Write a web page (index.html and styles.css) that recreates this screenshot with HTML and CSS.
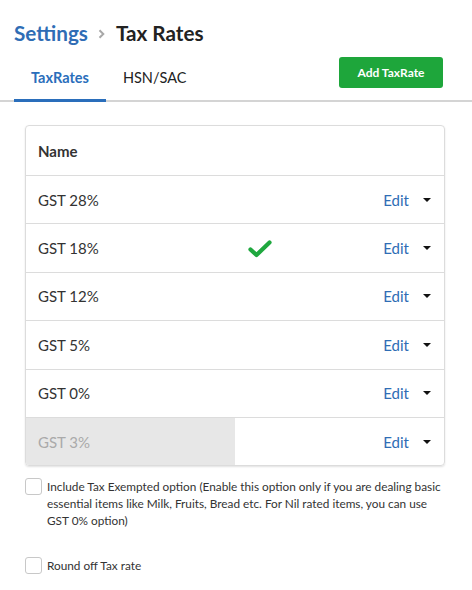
FILE: index.html
```html
<!DOCTYPE html>
<html>
<head>
<meta charset="utf-8">
<link rel="stylesheet" href="styles.css">
</head>
<body>
<div class="page">
  <h1 class="crumbs"><span class="crumb-link">Settings</span><svg class="crumb-sep" width="7" height="10" viewBox="0 0 7 10"><path d="M1.5 1.2 L5.3 5 L1.5 8.8" fill="none" stroke="#a8a8a8" stroke-width="2"/></svg><span class="crumb-cur">Tax Rates</span></h1>
  <div class="tabbar">
    <div class="tabs">
      <div class="tab active">TaxRates</div>
      <div class="tab">HSN/SAC</div>
    </div>
    <button class="btn-add">Add TaxRate</button>
  </div>
  <div class="table">
    <div class="row head"><div class="cell-name">Name</div></div>
    <div class="row"><div class="cell-name">GST 28%</div><div class="cell-mid"></div><div class="cell-act"><span class="edit">Edit</span><span class="caret"></span></div></div>
    <div class="row"><div class="cell-name">GST 18%</div><div class="cell-mid"><svg class="check" width="24" height="18" viewBox="0 0 24 18"><path d="M2.5 9.5 L8.5 15 L21.5 2.5" fill="none" stroke="#1fa83f" stroke-width="4.2" stroke-linecap="round" stroke-linejoin="round"/></svg></div><div class="cell-act"><span class="edit">Edit</span><span class="caret"></span></div></div>
    <div class="row"><div class="cell-name">GST 12%</div><div class="cell-mid"></div><div class="cell-act"><span class="edit">Edit</span><span class="caret"></span></div></div>
    <div class="row"><div class="cell-name">GST 5%</div><div class="cell-mid"></div><div class="cell-act"><span class="edit">Edit</span><span class="caret"></span></div></div>
    <div class="row"><div class="cell-name">GST 0%</div><div class="cell-mid"></div><div class="cell-act"><span class="edit">Edit</span><span class="caret"></span></div></div>
    <div class="row last"><div class="cell-name disabled">GST 3%</div><div class="cell-mid"></div><div class="cell-act"><span class="edit">Edit</span><span class="caret"></span></div></div>
  </div>
  <label class="opt"><span class="box"></span><span class="opt-text">Include Tax Exempted option (Enable this option only if you are dealing basic essential items like Milk, Fruits, Bread etc. For Nil rated items, you can use GST 0% option)</span></label>
  <label class="opt opt2"><span class="box"></span><span class="opt-text">Round off Tax rate</span></label>
</div>
</body>
</html>
```

FILE: styles.css
```css
* { box-sizing: border-box; }
body {
  margin: 0;
  font-family: Lato, "Open Sans", sans-serif;
  color: #333;
  background: #fff;
}
.page { width: 472px; }
.crumbs {
  margin: 0;
  padding: 20px 14px 0;
  font-size: 20.7px;
  font-weight: 700;
  line-height: 26px;
  display: flex;
  align-items: center;
}
.crumb-link { color: #2f6db5; }
.crumb-sep {
  display: block;
  margin: 1px 11px 0 10px;
}
.crumb-cur { color: #222; }
.tabbar {
  margin-top: 11px;
  display: flex;
  justify-content: space-between;
  align-items: flex-end;
  border-bottom: 2px solid #d4d4d4;
  padding: 0 29px 0 14px;
}
.tabs { display: flex; }
.tab {
  padding: 0 17px 12px;
  font-size: 14.5px;
  line-height: 18px;
  color: #222;
  margin-bottom: -2px;
  border-bottom: 3px solid transparent;
}
.tab.active {
  color: #2a6ebb;
  font-weight: 700;
  border-bottom-color: #2a6ebb;
}
.btn-add {
  margin-bottom: 12px;
  width: 104px;
  height: 31px;
  border: none;
  border-radius: 3px;
  background: #1ea63b;
  color: #fff;
  font-family: Lato, sans-serif;
  font-weight: 700;
  font-size: 12px;
}
.table {
  margin: 23px 27px 0 25px;
  border: 1px solid #dcdcdc;
  border-radius: 4px;
  overflow: hidden;
  box-shadow: 0 1px 2px rgba(0,0,0,0.12);
}
.row {
  display: grid;
  grid-template-columns: 50% 1fr auto;
  height: 48.4px;
  border-top: 1px solid #dcdcdc;
  font-size: 15px;
  color: #333;
}
.row.head {
  border-top: none;
  height: 49px;
  font-weight: 700;
  grid-template-columns: 1fr;
}
.cell-name {
  display: flex;
  align-items: center;
  padding-left: 12px;
}
.cell-name.disabled {
  background: #e7e7e7;
  color: #aaa;
}
.cell-mid {
  display: flex;
  align-items: center;
  padding-left: 13px;
}
.check { display: block; margin-top: 1px; }
.cell-act {
  display: flex;
  align-items: center;
  padding-right: 13px;
}
.edit { color: #2f6db5; }
.caret {
  margin-left: 14px;
  width: 0;
  height: 0;
  border-left: 4px solid transparent;
  border-right: 4px solid transparent;
  border-top: 4px solid #111;
}
.opt {
  display: flex;
  align-items: flex-start;
  margin: 12px 28px 0 25px;
  font-size: 11.8px;
  line-height: 17px;
  color: #333;
}
.opt2 { margin-top: 28px; }
.box {
  flex: none;
  width: 17px;
  height: 17px;
  border: 1px solid #c8c8c8;
  border-radius: 3px;
  margin-right: 5px;
}
```
